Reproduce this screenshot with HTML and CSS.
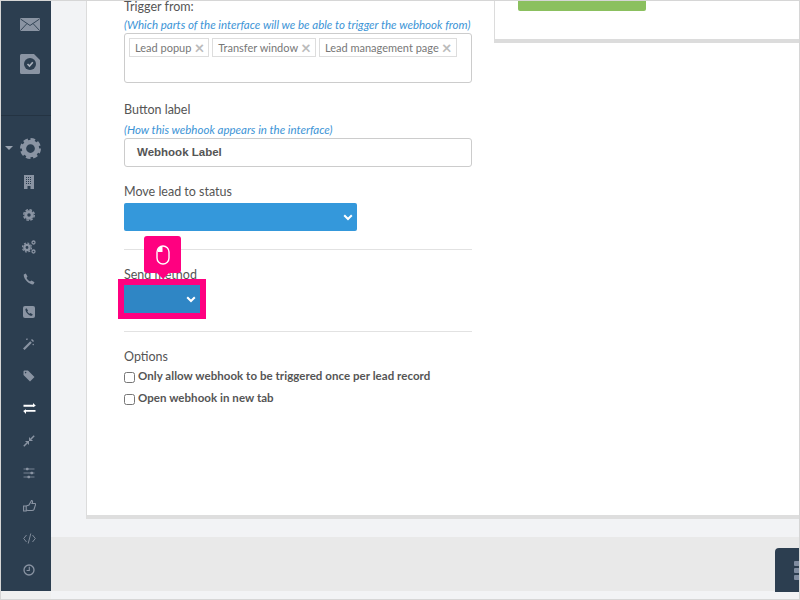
FILE: index.html
```html
<!DOCTYPE html>
<html lang="en">
<head>
<meta charset="utf-8">
<title>Webhook settings</title>
<link rel="stylesheet" href="styles.css">
</head>
<body>
<div class="screen">
  <nav class="sidebar">
    <div class="nav-top">
      <svg class="ico mail" viewBox="0 0 20 13"><rect width="20" height="13" rx="1" class="f"/><path d="M0.5 1 10 7.5 19.5 1M0.5 12.5 7 5.5M19.5 12.5 13 5.5" class="d"/></svg>
      <svg class="ico doc" viewBox="0 0 20 20"><path d="M1.5 0H14L20 6V18.500A1.500 1.500 0 0 1 18.500 20H1.500A1.500 1.500 0 0 1 0 18.500V1.500A1.500 1.500 0 0 1 1.500 0Z" class="f"/><circle cx="10" cy="10" r="6" fill="#2c3e50"/><path d="M7.500 10 9.500 12 12.800 8.200" fill="none" stroke="#aab1bc" stroke-width="1.600"/></svg>
    </div>
    <div class="nav-list">
      <div class="nav-item nav-head">
        <span class="caret"></span>
        <svg class="ico gear-big" viewBox="0 0 24 24"><circle cx="12" cy="12" r="7.500" fill="none" stroke="#8a94a3" stroke-width="5"/><circle cx="12" cy="12" r="10.500" fill="none" stroke="#8a94a3" stroke-width="3" stroke-dasharray="5.200 3"/></svg>
      </div>
      <div class="nav-item"><svg class="ico s14" viewBox="0 0 14 14"><path d="M2 0H12V14H2Z" class="f"/><path d="M4 2.500H10M4 4.500H10M4 6.500H10M4 8.500H10" stroke="#2c3e50" stroke-width="1" stroke-dasharray="1 1"/><rect x="5.500" y="11" width="3" height="3" fill="#2c3e50"/></svg></div>
      <div class="nav-item"><svg class="ico s12" viewBox="0 0 24 24"><circle cx="12" cy="12" r="6.500" fill="none" stroke="#8a94a3" stroke-width="6"/><circle cx="12" cy="12" r="10.500" fill="none" stroke="#8a94a3" stroke-width="3" stroke-dasharray="5.200 3"/></svg></div>
      <div class="nav-item"><svg class="ico s14" viewBox="0 0 14 14"><circle cx="5" cy="7.500" r="2.600" fill="none" stroke="#8a94a3" stroke-width="2.400"/><circle cx="5" cy="7.500" r="4.500" fill="none" stroke="#8a94a3" stroke-width="1.200" stroke-dasharray="2 1.500"/><circle cx="11.500" cy="2.500" r="1.500" fill="none" stroke="#8a94a3" stroke-width="1.300"/><circle cx="11.500" cy="11.500" r="1.500" fill="none" stroke="#8a94a3" stroke-width="1.300"/></svg></div>
      <div class="nav-item"><svg class="ico s12" viewBox="0 0 12 12"><path d="M2.800 0.500 4.500 3.500 3.500 5C4.300 6.600 5.400 7.700 7 8.500L8.500 7.500 11.500 9.200 10.500 11.300C7.500 12.300 0 6 0.800 1.500Z" class="f"/></svg></div>
      <div class="nav-item"><svg class="ico s12" viewBox="0 0 12 12"><rect width="12" height="12" rx="2" class="f"/><path d="M3.500 2.200 5 4.500 4.300 5.500C4.800 6.500 5.500 7.200 6.500 7.700L7.500 7 9.800 8.500 9 9.800C6.500 10.300 2 6 2.400 3Z" fill="#2c3e50"/></svg></div>
      <div class="nav-item"><svg class="ico s12" viewBox="0 0 12 12"><path d="M0.800 11.200 8 4" stroke="#8a94a3" stroke-width="2.200" fill="none"/><path d="M9 1 11 3 10 4 8 2Z" class="f"/><path d="M3 1.500H4.500M4 0V2M9.500 6.500H11M10.300 5.800V7.300" stroke="#8a94a3" stroke-width=".7"/></svg></div>
      <div class="nav-item"><svg class="ico s12" viewBox="0 0 12 12"><path d="M0.500 1.500A1 1 0 0 1 1.500 0.500H5L11.500 7 7 11.500 0.500 5Z" class="f"/><circle cx="2.600" cy="2.600" r=".8" fill="#2c3e50"/></svg></div>
      <div class="nav-item"><svg class="ico s13" viewBox="0 0 13 13"><path d="M0.500 2.800H10V1L12.800 3.700 10 5.300V4.700H0.500ZM12.500 8V9.800H3V12L0.200 9 3 7.300V8Z" fill="#fff"/></svg></div>
      <div class="nav-item"><svg class="ico s12" viewBox="0 0 12 12"><path d="M0.800 11.200 4 8M11.200 0.800 8 4" stroke="#8a94a3" stroke-width="1.500"/><path d="M2 6H6V10ZM6 2V6H10Z" class="f"/></svg></div>
      <div class="nav-item"><svg class="ico s12" viewBox="0 0 12 12"><path d="M0.500 2H11.500M0.500 6H11.500M0.500 10H11.500" stroke="#8a94a3" stroke-width=".8"/><rect x="3" y="0.800" width="2.500" height="2.400" rx=".6" class="f"/><rect x="7.500" y="4.800" width="2.500" height="2.400" rx=".6" class="f"/><rect x="4.500" y="8.800" width="2.500" height="2.400" rx=".6" class="f"/></svg></div>
      <div class="nav-item"><svg class="ico s13" viewBox="0 0 13 13"><path d="M0.600 7H3.200V12H0.600ZM3.200 7 6 6 8.500 1.500C9.800 1.500 9.800 3 9 4.500H12A.8.8 0 0 1 12.500 5.800L11 10.500C10.500 11.500 9.500 11.500 9 11.500H5L3.200 11Z" fill="none" stroke="#8a94a3" stroke-width="1.100"/></svg></div>
      <div class="nav-item"><svg class="ico s13" viewBox="0 0 13 13"><path d="M3.500 3 0.700 6.500 3.500 10M9.500 3 12.300 6.500 9.500 10M7.800 1.500 5.200 11.500" fill="none" stroke="#8a94a3" stroke-width=".9"/></svg></div>
      <div class="nav-item"><svg class="ico s12" viewBox="0 0 12 12"><circle cx="6" cy="6" r="5" fill="none" stroke="#8a94a3" stroke-width="1.300"/><path d="M6.300 2.800V6.500H3.600" fill="none" stroke="#8a94a3" stroke-width="1.100"/></svg></div>
    </div>
  </nav>
  <div class="main">
    <div class="panel">
      <div class="form">
        <div class="label first">Trigger from:</div>
        <div class="hint hint-first">(Which parts of the interface will we be able to trigger the webhook from)</div>
        <div class="tagbox">
          <span class="tag">Lead popup<i class="x">×</i></span>
          <span class="tag">Transfer window<i class="x">×</i></span>
          <span class="tag">Lead management page<i class="x">×</i></span>
        </div>
        <div class="label gap-button">Button label</div>
        <div class="hint hint-second">(How this webhook appears in the interface)</div>
        <div class="input">Webhook Label</div>
        <div class="label gap-move">Move lead to status</div>
        <div class="select wide"><svg class="chev" viewBox="0 0 10 7"><path d="M1.200 1.200 5 5 8.800 1.200" fill="none" stroke="#fff" stroke-width="2"/></svg></div>
        <hr class="rule rule-a">
        <div class="send">
          <div class="label">Send method</div>
          <div class="select narrow"><svg class="chev" viewBox="0 0 10 7"><path d="M1.200 1.200 5 5 8.800 1.200" fill="none" stroke="#fff" stroke-width="2"/></svg></div>
          <div class="highlight"></div>
          <div class="tip"><svg class="mouse" viewBox="0 0 14 20"><rect x="1" y="1" width="12" height="18" rx="6" fill="none" stroke="#fff" stroke-width="1.400"/><path d="M2 7V4.500A4.500 4.500 0 0 1 6.500 1.500V7Z" fill="#fff"/></svg></div>
        </div>
        <hr class="rule rule-b">
        <div class="label gap-options">Options</div>
        <label class="check first-check"><input type="checkbox">Only allow webhook to be triggered once per lead record</label>
        <label class="check second-check"><input type="checkbox">Open webhook in new tab</label>
      </div>
      <aside class="side-card"><div class="green"></div></aside>
    </div>
    <div class="spacer"></div>
    <div class="band"><div class="fab"><span></span><span></span><span></span></div></div>
  </div>
</div>
</body>
</html>
```

FILE: styles.css
```css
* { box-sizing: border-box; }
html, body { margin: 0; height: 100%; }
body { font-family: Lato, "Open Sans", sans-serif; background: #f0f0f0; overflow: hidden; }

.screen {
  width: 800px; height: 600px;
  display: flex;
  background: #f0f0f0;
  border: 1px solid #d6d6d6;
  align-items: flex-start;
}

.sidebar {
  width: 50px; height: 590px; flex: none;
  background: #2c3e50;
  display: flex; flex-direction: column;
}
.nav-top {
  height: 115px;
  border-bottom: 1px solid #243342;
  display: flex; flex-direction: column; align-items: center;
  padding: 17px 0 0 8px;
  gap: 16px;
  flex: none;
}
.ico { display: block; }
.f { fill: #8a94a3; }
.d { fill: none; stroke: #2c3e50; stroke-width: .9; }
.mail { width: 20px; height: 13px; }
.doc { width: 20px; height: 20px; margin-top: 7px; }
.nav-list { padding-top: 16px; }
.nav-item { height: 32.33px; display: flex; align-items: center; justify-content: center; position: relative; padding-left: 6px; }
.nav-head { padding-left: 8px; margin-bottom: 2px; }
.caret { position: absolute; left: 4px; top: 14px; border: 4px solid transparent; border-top: 4px solid #98a1ae; border-bottom: 0; }
.gear-big { width: 21px; height: 21px; }
.s12 { width: 12px; height: 12px; }
.s13 { width: 13px; height: 13px; }
.s14 { width: 14px; height: 14px; }

.main { flex: 1; min-width: 0; height: 598px; background: #f2f3f5; display: flex; flex-direction: column; }
.panel {
  margin-left: 35px; height: 518px; flex: none;
  background: #fff;
  border-left: 1px solid #dcdcdc;
  border-bottom: 4px solid #dedede;
  display: flex;
  padding-left: 37px;
}
.form { width: 348px; flex: none; }
.label { font-size: 12.500px; line-height: 16px; color: #555; }
.first { margin-top: -2px; }
.hint { font-size: 11.500px; line-height: 14px; font-style: italic; color: #3c94d6; }
.hint-first { margin-top: 3px; }
.hint-second { margin-top: 5px; }
.tagbox {
  height: 50px; margin-top: 1px;
  border: 1px solid #ccc; border-radius: 3px;
  padding: 4px;
  display: flex; align-items: flex-start; gap: 3px;
}
.tag {
  height: 19px; padding: 0 4px 0 5px;
  border: 1px solid #ddd;
  font-size: 11px; line-height: 17px; color: #777;
  display: inline-flex; align-items: center; white-space: nowrap;
}
.x { font-style: normal; font-weight: 700; font-size: 17px; color: #bbb; margin-left: 3px; line-height: 15px; }
.gap-button { margin-top: 19px; }
.input {
  height: 29px; margin-top: 1px;
  border: 1px solid #ccc; border-radius: 3px;
  padding: 0 12px;
  font-family: "Liberation Sans", Arial, sans-serif; font-weight: 700; font-size: 11.500px; line-height: 27px; color: #555;
}
.gap-move { margin-top: 17px; }
.select { height: 28px; background: #3498db; border-radius: 2px; position: relative; }
.wide { width: 233px; margin-top: 3px; }
.narrow { width: 76px; margin-top: 2px; background: #2f86c5; border-radius: 0; }
.chev { position: absolute; right: 4px; top: 11px; width: 10px; height: 7px; }
.rule { border: 0; height: 1px; background: #e2e2e2; margin: 0; }
.rule-a { margin-top: 18px; }
.send { position: relative; margin-top: 17px; }
.rule-b { margin-top: 18px; }
.highlight { position: absolute; left: -6px; top: 12px; width: 88px; height: 40px; border: 6px solid #ff0080; pointer-events: none; }
.tip {
  position: absolute; left: 20px; top: -31px; width: 37px; height: 37px;
  background: #ff0080; border-radius: 3px;
  display: flex; align-items: center; justify-content: center;
}
.tip::after {
  content: ""; position: absolute; left: 13px; top: 37px;
  border: 6px solid transparent; border-top: 6px solid #ff0080; border-bottom: 0;
}
.mouse { width: 14px; height: 20px; }
.gap-options { margin-top: 17px; }
.check {
  display: flex; align-items: center;
  font-size: 11.500px; font-weight: 700; line-height: 14px; color: #555; letter-spacing: .05px;
}
.check input { width: 11px; height: 11px; margin: 2px 3px 0 0; flex: none; }
.first-check { margin-top: 4px; }
.second-check { margin-top: 8px; }

.side-card {
  margin-left: 22px; flex: 1; height: 42px;
  border-left: 1px solid #dcdcdc;
  border-bottom: 4px solid #dcdcdc;
  padding-left: 23px;
  background: #fff;
}
.green { width: 128px; height: 10px; background: #8bc05f; border-radius: 0 0 2px 2px; }

.spacer { height: 18px; flex: none; }
.band { height: 54px; flex: none; background: #e9e9e9; display: flex; justify-content: flex-end; }
.fab { width: 24px; height: 44px; margin-top: 11px; background: #2c3e50; border-radius: 4px 0 0 0; display: flex; flex-direction: column; gap: 2px; align-items: flex-end; padding-top: 13px; }
.fab span { width: 5px; height: 5px; background: #7f8ca0; border-radius: 1px 0 0 1px; }
```
